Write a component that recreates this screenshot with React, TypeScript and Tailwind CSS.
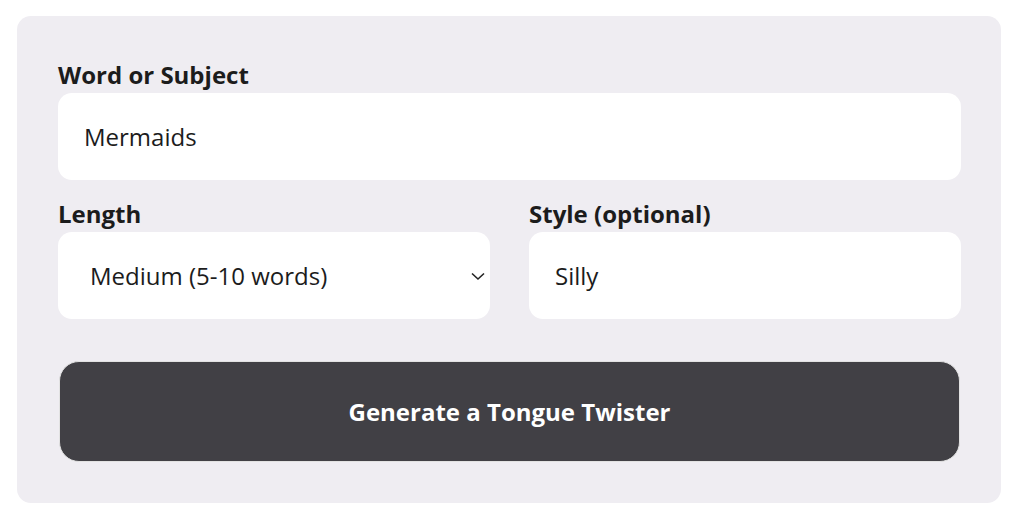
import React from "react";

export default function App() {
  return (
    <div className="w-[1024px] h-[525px] bg-white pt-4 pl-[17px]" style={{ fontFamily: '"Open Sans", "Noto Sans", sans-serif' }}>
      <div className="w-[984px] h-[487px] bg-[#efedf2] rounded-[14px] pl-[41px] pr-[40px] pt-[47px]">
        <label className="block text-[24px] font-bold text-[#1c1c1c] leading-[24px] mb-[6px]">Word or Subject</label>
        <div className="h-[87px] bg-white rounded-[14px] flex items-center pl-[26px] text-[24px] text-[#1c1c1c]">Mermaids</div>
        <div className="flex gap-[39px] mt-[22px]">
          <div className="flex-1">
            <label className="block text-[24px] font-bold text-[#1c1c1c] leading-[24px] mb-[6px]">Length</label>
            <div className="h-[87px] bg-white rounded-[14px] flex items-center justify-between pl-[32px] pr-[4px] text-[24px] text-[#1c1c1c]">
              <span>Medium (5-10 words)</span>
              <svg width="16" height="16" viewBox="0 0 16 16" fill="none" stroke="#222" strokeWidth="1.6">
                <path d="M2 5.5 L8 11 L14 5.5" />
              </svg>
            </div>
          </div>
          <div className="flex-1">
            <label className="block text-[24px] font-bold text-[#1c1c1c] leading-[24px] mb-[6px]">Style (optional)</label>
            <div className="h-[87px] bg-white rounded-[14px] flex items-center pl-[26px] text-[24px] text-[#1c1c1c]">Silly</div>
          </div>
        </div>
        <div className="mt-[42px] h-[101px] bg-[#414045] rounded-[20px] border border-[#e2e2e2] mx-[1px] flex items-center justify-center text-white text-[24px] font-bold">
          Generate a Tongue Twister
        </div>
      </div>
    </div>
  );
}
